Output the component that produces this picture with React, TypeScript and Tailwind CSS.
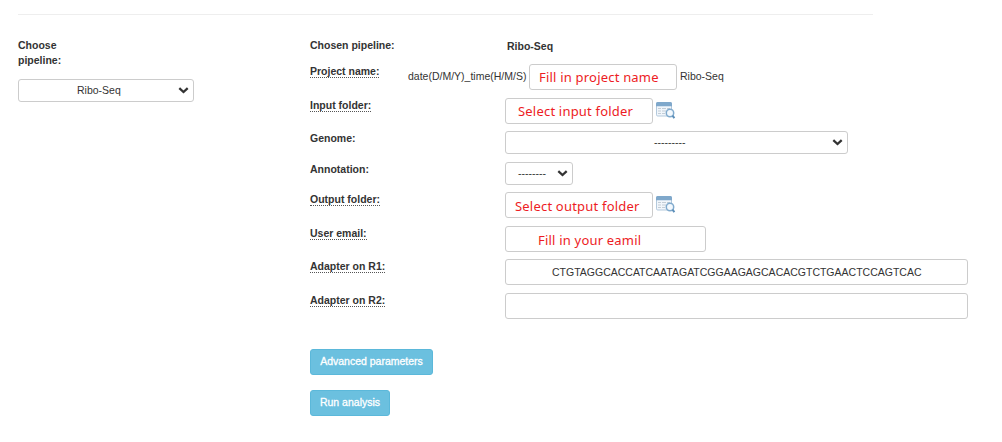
import React from "react";

const Chevron = () => (
  <svg className="ml-auto mr-1 block h-[7px] w-[11px] shrink-0" viewBox="0 0 11 7" fill="none">
    <path d="M1.3 1.2 L5.5 5 L9.7 1.2" stroke="#333" strokeWidth="2.3" />
  </svg>
);

const BrowseIcon = () => (
  <svg className="mt-1 ml-[3px] block h-[18px] w-5 shrink-0" viewBox="0 0 20 18" fill="none">
    <rect x="0.5" y="0.5" width="15" height="13.5" rx="1.2" fill="#f1f6fb" stroke="#b3c9dc" />
    <path d="M0 4.2V1.5Q0 0 1.5 0H14.5Q16 0 16 1.5V4.2Z" fill="#7fa8cb" />
    <path d="M2 6.5h3M6 6.5h4M11 6.5h3M2 9h3M6 9h4M2 11.5h3M6 11.5h3" stroke="#c3cdd6" strokeWidth="1" />
    <circle cx="14" cy="11" r="3.7" fill="#f3f9fe" stroke="#80aacd" strokeWidth="1.5" />
    <path d="M16.5 13.7L18.4 16.2" stroke="#5d8fb9" strokeWidth="2" />
  </svg>
);

const Row = ({ label, hint = false, className, children }: {
  label: string; hint?: boolean; className: string; children?: React.ReactNode;
}) => (
  <div className={`flex items-start ${className}`}>
    <div className="w-[195px] shrink-0 font-bold">
      <span className={hint ? "inline-block h-[14px] border-b border-dotted border-[#555]" : "inline-block"}>{label}</span>
    </div>
    {children}
  </div>
);

const Field = ({ className, children }: { className: string; children?: React.ReactNode }) => (
  <div className={`flex shrink-0 items-center whitespace-nowrap rounded-[3px] border border-[#ccc] bg-white ${className}`}>
    {children}
  </div>
);

const Note = ({ className, children }: { className: string; children: React.ReactNode }) => (
  <span className={`font-['Noto_Sans',sans-serif] text-[13px] leading-[18px] tracking-[0.2px] text-[#ed1c24] ${className}`}>{children}</span>
);

export default function App() {
  return (
    <main className="h-[442px] w-[1002px] overflow-hidden bg-white pl-[18px] pt-[14px] font-['Liberation_Sans',Arial,sans-serif] text-[10.5px] leading-[15px] text-[#333]">
      <div className="h-px w-[855px] bg-[#eee]" />
      <div className="flex pt-[23px]">
        <section className="w-[292px] shrink-0">
          <div className="w-[60px] font-bold">Choose pipeline:</div>
          <Field className="mt-[11px] h-[23px] w-[176px] pl-[58px]"><span>Ribo-Seq</span><Chevron /></Field>
        </section>
        <section className="w-[670px]">
          <Row label="Chosen pipeline:" className="h-[26px]">
            <span className="ml-[2px] mt-px font-bold">Ribo-Seq</span>
          </Row>
          <Row label="Project name:" hint className="h-[34px]">
            <span className="-ml-[97px] mt-[5px] w-[121px] shrink-0 whitespace-nowrap">date(D/M/Y)_time(H/M/S)</span>
            <Field className="h-[26px] w-[148px] pl-[9px]"><Note className="">Fill in project name</Note></Field>
            <span className="ml-[3px] mt-[5px]">Ribo-Seq</span>
          </Row>
          <Row label="Input folder:" hint className="h-[33px]">
            <Field className="h-[26px] w-[148px] pl-[12px]"><Note className="">Select input folder</Note></Field>
            <BrowseIcon />
          </Row>
          <Row label="Genome:" className="h-[31px]">
            <Field className="h-[23px] w-[343px] pl-[148px]"><span>---------</span><Chevron /></Field>
          </Row>
          <Row label="Annotation:" className="h-[30px]">
            <Field className="h-[23px] w-[68px] pl-[12px]"><span>--------</span><Chevron /></Field>
          </Row>
          <Row label="Output folder:" hint className="h-[34px]">
            <Field className="h-[26px] w-[148px] pl-[9px]"><Note className="mt-[2px]">Select output folder</Note></Field>
            <BrowseIcon />
          </Row>
          <Row label="User email:" hint className="h-[33px]">
            <Field className="h-[26px] w-[201px] pl-[32px]"><Note className="mt-[2px]">Fill in your eamil</Note></Field>
          </Row>
          <Row label="Adapter on R1:" hint className="h-[34px]">
            <Field className="h-[26px] w-[463px] pl-[46px]"><span>CTGTAGGCACCATCAATAGATCGGAAGAGCACACGTCTGAACTCCAGTCAC</span></Field>
          </Row>
          <Row label="Adapter on R2:" hint className="h-[56px]">
            <Field className="h-[26px] w-[463px]" />
          </Row>
          <div className="flex flex-col items-start gap-[15px] text-white [-webkit-text-stroke:0.3px_white]">
            <button className="h-[26px] w-[123px] whitespace-nowrap rounded-[3px] border border-[#5bb8da] bg-[#6bc0df] pb-px">Advanced parameters</button>
            <button className="h-[26px] w-[80px] whitespace-nowrap rounded-[3px] border border-[#5bb8da] bg-[#6bc0df] pb-px">Run analysis</button>
          </div>
        </section>
      </div>
    </main>
  );
}
